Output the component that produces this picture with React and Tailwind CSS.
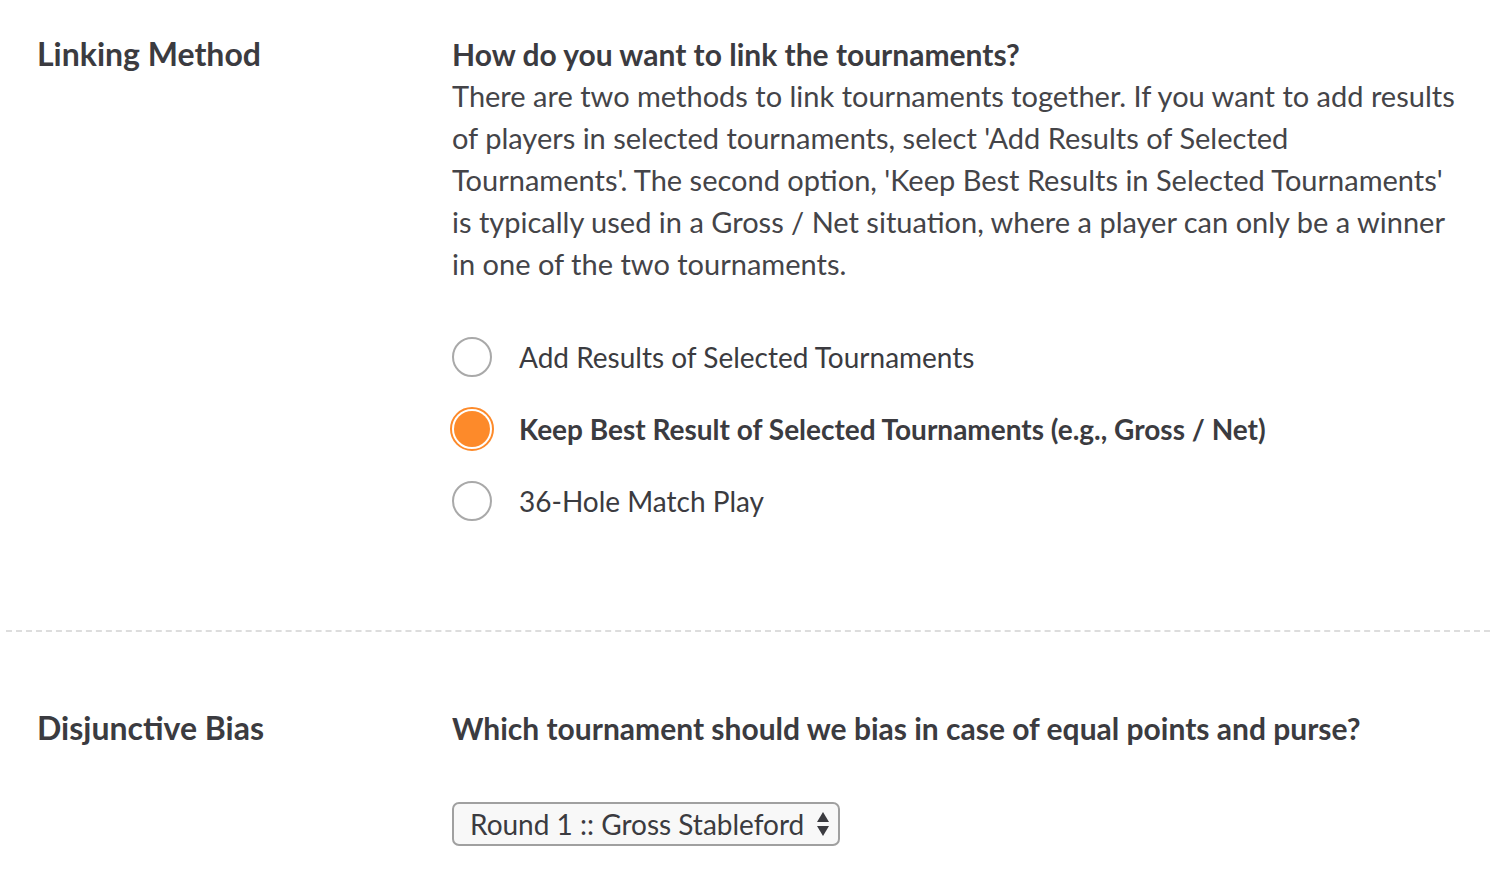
import { useState } from 'react';

const options = [
  'Add Results of Selected Tournaments',
  'Keep Best Result of Selected Tournaments (e.g., Gross / Net)',
  '36-Hole Match Play',
];

const Radio = ({ checked }) =>
  checked ? (
    <span className="flex h-[44px] w-[44px] shrink-0 items-center justify-center rounded-full border-2 border-[#fd8a2a] bg-white">
      <span className="h-[36px] w-[36px] rounded-full bg-[#fd8a2a]" />
    </span>
  ) : (
    <span className="mx-[2px] h-[40px] w-[40px] shrink-0 rounded-full border-2 border-[#a9a9a9] bg-white" />
  );

const App = () => {
  const [method, setMethod] = useState(1);

  return (
    <div className="min-h-screen bg-white font-['Lato',sans-serif] text-[#3b3b40]">
      {/* Linking Method */}
      <section className="grid grid-cols-[415px_1fr] pl-[37px] pr-[21px] pt-[33px] pb-[108px]">
        <h2 className="text-[32px] font-bold leading-[42px]">Linking Method</h2>
        <div>
          <h3 className="text-[30px] font-bold leading-[42px]">How do you want to link the tournaments?</h3>
          <p className="text-[29px] leading-[42px] text-[#444448]">
            There are two methods to link tournaments together. If you want to add results
            <br />
            of players in selected tournaments, select 'Add Results of Selected
            <br />
            Tournaments'. The second option, 'Keep Best Results in Selected Tournaments'
            <br />
            is typically used in a Gross / Net situation, where a player can only be a winner
            <br />
            in one of the two tournaments.
          </p>
          <div className="mt-[51px] flex flex-col gap-[30px]">
            {options.map((opt, idx) => (
              <label
                key={idx}
                onClick={() => setMethod(idx)}
                className="-ml-[2px] flex h-[42px] cursor-pointer items-center gap-[25px]"
              >
                <Radio checked={method === idx} />
                <span className={`text-[28px] ${method === idx ? 'font-bold' : ''}`}>{opt}</span>
              </label>
            ))}
          </div>
        </div>
      </section>

      <div className="mx-[6px] border-t-2 border-dashed border-[#dddddd]" />

      {/* Disjunctive Bias */}
      <section className="grid grid-cols-[415px_1fr] pl-[37px] pr-[21px] pt-[75px]">
        <h2 className="text-[32px] font-bold leading-[42px]">Disjunctive Bias</h2>
        <div>
          <h3 className="text-[30px] font-bold leading-[42px]">
            Which tournament should we bias in case of equal points and purse?
          </h3>
          <div className="mt-[53px] inline-flex h-[44px] items-center gap-[12px] rounded-[7px] border-2 border-[#a0a0a0] bg-[#f8f8f8] pl-[16px] pr-[8px]">
            <span className="text-[28px] leading-none">Round 1 :: Gross Stableford</span>
            <svg width="14" height="28" viewBox="0 0 14 28" className="fill-[#3b3b40]">
              <path d="M7 2 L13 12 H1 Z" />
              <path d="M7 26 L13 16 H1 Z" />
            </svg>
          </div>
        </div>
      </section>
    </div>
  );
};

export default App;
